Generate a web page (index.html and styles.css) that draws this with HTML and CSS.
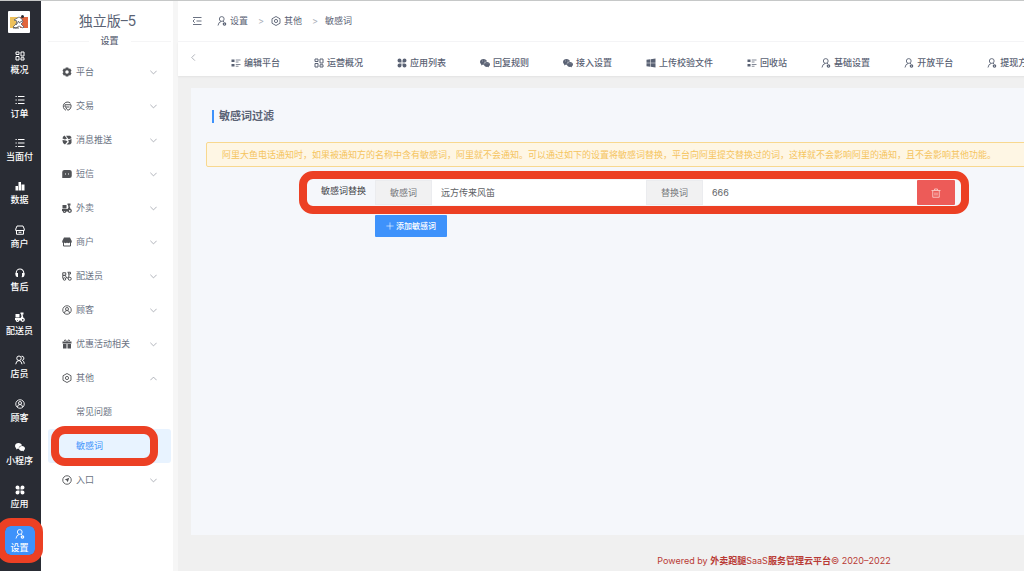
FILE: index.html
```html
<!DOCTYPE html>
<html lang="zh-CN">
<head>
  <meta charset="UTF-8" />
  <meta name="viewport" content="width=device-width, initial-scale=1.0"/>
  <title>敏感词过滤</title>
  <link rel="stylesheet" href="styles.css">
</head>
<body>

  <svg class="sprite" aria-hidden="true">
    <symbol id="i-grid" viewBox="0 0 20 20"><path fill="none" stroke="currentColor" stroke-width="2" d="M2 2h6v5H2zM12 2h6v8h-6zM2 11h6v7H2zM12 13.500h6v4.500h-6z"/></symbol>
    <symbol id="i-list" viewBox="0 0 20 20"><path fill="none" stroke="currentColor" stroke-width="2" d="M6 3h13M6 10h13M6 17h13M1 3h2.500M1 10h2.500M1 17h2.500"/></symbol>
    <symbol id="i-bars" viewBox="0 0 20 20"><path fill="currentColor" d="M1 10h5v9H1zM7 2h5v17H7zM13 7h6v12h-6z"/></symbol>
    <symbol id="i-shop" viewBox="0 0 20 20"><path fill="none" stroke="currentColor" stroke-width="2" d="M4 2h12l2.500 6v3h-17V8zM3 11v7.500h14V11M7 14.500h6"/></symbol>
    <symbol id="i-shop-fill" viewBox="0 0 20 20"><path fill="currentColor" d="M4 1h12l3.500 7v2a2.500 2.500 0 0 1-4.500 1 3 3 0 0 1-5 0 3 3 0 0 1-5 0A2.500 2.500 0 0 1 .5 10V8z"/><path fill="none" stroke="currentColor" stroke-width="2" d="M3 11v7h14v-7"/></symbol>
    <symbol id="i-headset" viewBox="0 0 20 20"><path fill="none" stroke="currentColor" stroke-width="2.200" d="M2.500 13V9.500a7.500 7.500 0 0 1 15 0V13q0 4-4 5"/><path fill="currentColor" d="M1 10h5v8H4q-3-1-3-4zM14 10h5v4q0 3-3 4h-2z"/></symbol>
    <symbol id="i-scooter" viewBox="0 0 20 20"><path fill="currentColor" d="M1 4h8v7H1zM11 1h6v4h-2l2 7h-3l-1 5H7L5 12h6l2-3-1-5h-1zM0 12h6l4 4H0z"/><circle cx="5" cy="16" r="2.500" fill="none" stroke="currentColor" stroke-width="2.500"/><circle cx="15.500" cy="15.500" r="3" fill="none" stroke="currentColor" stroke-width="2.500"/></symbol>
    <symbol id="i-scooter-line" viewBox="0 0 20 20"><path fill="none" stroke="currentColor" stroke-width="2" d="M1.500 3.500h6v5h-6zM1.500 9h5l3 5H12l2-4-1-7.500h-2M13 2.500h4V6h-3M1.500 9v6"/><circle cx="5" cy="16" r="2.500" fill="none" stroke="currentColor" stroke-width="2"/><circle cx="15.500" cy="15.500" r="3" fill="none" stroke="currentColor" stroke-width="2"/></symbol>
    <symbol id="i-users" viewBox="0 0 20 20"><g fill="none" stroke="currentColor" stroke-width="2"><circle cx="8" cy="6.500" r="4.500"/><path d="M1.500 18.500q.5-7 6.500-7.500 5 .5 6 7.500M13 2.500a4 4 0 0 1 1.500 8q4 2 4 7"/></g></symbol>
    <symbol id="i-user-circle" viewBox="0 0 20 20"><g fill="none" stroke="currentColor" stroke-width="1.800"><circle cx="10" cy="10" r="8.500"/><circle cx="10" cy="8" r="3"/><path d="M5 16q0-5 5-5t5 5"/></g></symbol>
    <symbol id="i-wechat" viewBox="0 0 20 20"><path fill="currentColor" d="M7 2C3 2 0 4.500 0 8q0 2.800 2.500 4.500L2 15l2.800-1.400 2.700.4C7 10 10 7 14 7 13.500 4 10.500 2 7 2z"/><path fill="currentColor" d="M14 8c-3.500 0-6 2-6 5s2.500 5 6 5l2-.3L18 19l-.4-2.200Q20 15.300 20 13c0-3-2.500-5-6-5z"/><path stroke="#fff" stroke-opacity=".7" stroke-width="1.500" d="M4 6h1.500M9 6h1.500M11.500 11.500h1M15.500 11.500h1"/></symbol>
    <symbol id="i-apps" viewBox="0 0 20 20"><path fill="currentColor" d="M1 5a4 4 0 0 1 8 0v4H5a4 4 0 0 1-4-4zM11 5a4 4 0 1 1 4 4h-4zM5 11h4v4a4 4 0 1 1-4-4zM11 11h4a4 4 0 1 1-4 4z"/></symbol>
    <symbol id="i-user-set" viewBox="0 0 20 20"><g fill="none" stroke="currentColor" stroke-width="1.800"><circle cx="9.500" cy="6" r="4.800"/><path d="M2 19q1-7 6.500-8.200M12 10.500l2 1"/></g><circle cx="15" cy="16" r="2.400" fill="none" stroke="currentColor" stroke-width="2.400"/></symbol>
    <symbol id="i-gear" viewBox="0 0 20 20"><path fill="currentColor" fill-rule="evenodd" d="M7.500 1h5l1 2.500 3-.5 2.500 4.500L17 10l2 2.500-2.500 4.500-3-.5-1 2.500h-5l-1-2.500-3 .5L1 12.500 3 10 1 7.500 3.500 3l3 .5zM10 6.500a3.500 3.500 0 1 0 0 7 3.500 3.500 0 0 0 0-7z"/></symbol>
    <symbol id="i-trade" viewBox="0 0 20 20"><g fill="none" stroke="currentColor" stroke-width="2"><path d="M17 4.500A8.500 8.500 0 1 0 8 18.500M6 7.500h12v4.500q-1 5-6 6.500-3.500-2-4-5.500M6 7.500V12h9"/></g></symbol>
    <symbol id="i-push" viewBox="0 0 20 20"><path fill="currentColor" d="M1 7q0-4 4-6l5 6-4 2zM8 1.500h8q3 1 3 5l-6 2zM1 10l7 1 3 2-5 6q-5-2-5-9zM12 11l7-3v8q-2 3-5 3H9l5-5z"/></symbol>
    <symbol id="i-sms" viewBox="0 0 20 20"><path fill="currentColor" d="M5 2h10q4.500 0 4.500 4v8q0 4-4.500 4H.5V6Q.5 2 5 2z"/><path stroke="#fff" stroke-width="2" d="M6 10h2M12 10h2"/></symbol>
    <symbol id="i-gift" viewBox="0 0 20 20"><path fill="currentColor" d="M1 5h18v4H1zM2 10h6v9H2zM9 10h2v9H9zM12 10h6v9h-6z"/><path fill="none" stroke="currentColor" stroke-width="2" d="M10 5Q5-1 5 4M10 5q5-6 5-1"/></symbol>
    <symbol id="i-hex" viewBox="0 0 20 20"><g fill="none" stroke="currentColor" stroke-width="1.800"><path d="M10 1l8 4.500v9L10 19l-8-4.500v-9z"/><circle cx="10" cy="10" r="3.200"/></g></symbol>
    <symbol id="i-compass" viewBox="0 0 20 20"><circle cx="10" cy="10" r="8.500" fill="none" stroke="currentColor" stroke-width="1.800"/><path fill="currentColor" d="M14.500 5.500l-3 9-2-3.500-4-2z"/></symbol>
    <symbol id="i-detail" viewBox="0 0 20 20"><path fill="currentColor" d="M1 3h6v5H1zM1 12h6v5H1z"/><path fill="none" stroke="currentColor" stroke-width="1.500" d="M9.500 4H19M9.500 8H15M9.500 13H19M9.500 16.500H15"/></symbol>
    <symbol id="i-windows" viewBox="0 0 20 20"><path fill="currentColor" d="M1 3.500l7.500-1v7H1zM9.500 2.300L19 1v8.500H9.500zM1 10.500h7.500v7l-7.500-1zM9.500 10.500H19V19l-9.500-1.300z"/></symbol>
    <symbol id="i-fold" viewBox="0 0 20 20"><path fill="none" stroke="currentColor" stroke-width="1.800" d="M2 3h17M9 10h10M2 17h17M5.500 6.500L2 10l3.500 3.500"/></symbol>
    <symbol id="i-down" viewBox="0 0 20 20"><path fill="none" stroke="currentColor" stroke-width="2" d="M1 5l9 9 9-9"/></symbol>
    <symbol id="i-left" viewBox="0 0 20 20"><path fill="none" stroke="currentColor" stroke-width="2" d="M14 1l-9 9 9 9"/></symbol>
    <symbol id="i-plus" viewBox="0 0 20 20"><path fill="none" stroke="currentColor" stroke-width="1.500" d="M10 1v18M1 10h18"/></symbol>
    <symbol id="i-trash" viewBox="0 0 20 20"><path fill="none" stroke="currentColor" stroke-width="1.800" d="M1 5h18M7 4.500V2h6v2.500M3.500 5v13.500h13V5M8 9v6M12 9v6"/></symbol>
  </svg>

  <div class="app">

    <nav class="rail">
      <a class="logo" href="#" aria-label="首页">
        <svg viewBox="0 0 22 22">
          <rect width="22" height="22" rx="1" fill="#fff"/>
          <path fill="#edc15c" d="M2 6h8v11H2z"/>
          <path fill="#e2653c" d="M12 6h8v11h-8z"/>
          <path fill="#fff" stroke="#4a5060" stroke-width=".7" d="M6 9l5-3 3 2 1 3-2 2 3 3-1 1-4-2-3 2-3-1 3-3 1-3z"/>
          <path fill="none" stroke="#333844" stroke-width=".8" d="M8 14l3-4M11 12l3-2M5 17h6"/>
          <circle cx="14.500" cy="5.500" r="1.500" fill="#262a33"/>
        </svg>
      </a>
      <ul class="rail-list">
        <li><a href="#"><svg class="icon"><use href="#i-grid"/></svg>概况</a></li>
        <li><a href="#"><svg class="icon"><use href="#i-list"/></svg>订单</a></li>
        <li><a href="#"><svg class="icon"><use href="#i-list"/></svg>当面付</a></li>
        <li><a href="#"><svg class="icon"><use href="#i-bars"/></svg>数据</a></li>
        <li><a href="#"><svg class="icon"><use href="#i-shop"/></svg>商户</a></li>
        <li><a href="#"><svg class="icon"><use href="#i-headset"/></svg>售后</a></li>
        <li><a href="#"><svg class="icon"><use href="#i-scooter"/></svg>配送员</a></li>
        <li><a href="#"><svg class="icon"><use href="#i-users"/></svg>店员</a></li>
        <li><a href="#"><svg class="icon"><use href="#i-user-circle"/></svg>顾客</a></li>
        <li><a href="#"><svg class="icon"><use href="#i-wechat"/></svg>小程序</a></li>
        <li><a href="#"><svg class="icon"><use href="#i-apps"/></svg>应用</a></li>
        <li><a class="active marked" href="#"><svg class="icon"><use href="#i-user-set"/></svg>设置</a></li>
      </ul>
    </nav>

    <aside class="sidebar">
      <h1>独立版–5</h1>
      <div class="divider"><span>设置</span></div>
      <ul class="menu">
        <li><button><svg class="icon"><use href="#i-gear"/></svg>平台<svg class="arrow"><use href="#i-down"/></svg></button></li>
        <li><button><svg class="icon"><use href="#i-trade"/></svg>交易<svg class="arrow"><use href="#i-down"/></svg></button></li>
        <li><button><svg class="icon"><use href="#i-push"/></svg>消息推送<svg class="arrow"><use href="#i-down"/></svg></button></li>
        <li><button><svg class="icon"><use href="#i-sms"/></svg>短信<svg class="arrow"><use href="#i-down"/></svg></button></li>
        <li><button><svg class="icon"><use href="#i-scooter"/></svg>外卖<svg class="arrow"><use href="#i-down"/></svg></button></li>
        <li><button><svg class="icon"><use href="#i-shop-fill"/></svg>商户<svg class="arrow"><use href="#i-down"/></svg></button></li>
        <li><button><svg class="icon"><use href="#i-scooter-line"/></svg>配送员<svg class="arrow"><use href="#i-down"/></svg></button></li>
        <li><button><svg class="icon"><use href="#i-user-circle"/></svg>顾客<svg class="arrow"><use href="#i-down"/></svg></button></li>
        <li><button><svg class="icon"><use href="#i-gift"/></svg>优惠活动相关<svg class="arrow"><use href="#i-down"/></svg></button></li>
        <li>
          <button aria-expanded="true"><svg class="icon"><use href="#i-hex"/></svg>其他<svg class="arrow up"><use href="#i-down"/></svg></button>
          <ul class="submenu">
            <li><a href="#">常见问题</a></li>
            <li><a class="active marked" href="#">敏感词</a></li>
          </ul>
        </li>
        <li><button><svg class="icon"><use href="#i-compass"/></svg>入口<svg class="arrow"><use href="#i-down"/></svg></button></li>
      </ul>
    </aside>

    <div class="main">
      <header class="topbar">
        <button class="fold" aria-label="收起菜单"><svg class="icon"><use href="#i-fold"/></svg></button>
        <a href="#"><svg class="icon"><use href="#i-user-set"/></svg>设置</a>
        <span class="sep">&gt;</span>
        <a href="#"><svg class="icon"><use href="#i-hex"/></svg>其他</a>
        <span class="sep">&gt;</span>
        <span>敏感词</span>
      </header>

      <nav class="tabs">
        <button class="prev" aria-label="向左"><svg class="arrow"><use href="#i-left"/></svg></button>
        <a href="#"><svg class="icon"><use href="#i-detail"/></svg>编辑平台</a>
        <a href="#"><svg class="icon"><use href="#i-grid"/></svg>运营概况</a>
        <a href="#"><svg class="icon"><use href="#i-apps"/></svg>应用列表</a>
        <a href="#"><svg class="icon"><use href="#i-wechat"/></svg>回复规则</a>
        <a href="#"><svg class="icon"><use href="#i-wechat"/></svg>接入设置</a>
        <a href="#"><svg class="icon"><use href="#i-windows"/></svg>上传校验文件</a>
        <a href="#"><svg class="icon"><use href="#i-detail"/></svg>回收站</a>
        <a href="#"><svg class="icon"><use href="#i-user-set"/></svg>基础设置</a>
        <a href="#"><svg class="icon"><use href="#i-user-set"/></svg>开放平台</a>
        <a href="#"><svg class="icon"><use href="#i-user-set"/></svg>提现方式</a>
      </nav>

      <main class="card">
        <h2>敏感词过滤</h2>
        <p class="alert">阿里大鱼电话通知时，如果被通知方的名称中含有敏感词，阿里就不会通知。可以通过如下的设置将敏感词替换，平台向阿里提交替换过的词，这样就不会影响阿里的通知，且不会影响其他功能。</p>

        <form class="form">
          <div class="row marked">
            <span class="row-label">敏感词替换</span>
            <div class="group">
              <label for="word">敏感词</label>
              <input type="text" id="word" value="远方传来风笛" />
              <label for="replace">替换词</label>
              <input type="text" id="replace" value="666" />
              <button type="button" class="delete" aria-label="删除"><svg class="icon"><use href="#i-trash"/></svg></button>
            </div>
          </div>
          <button type="button" class="add"><svg class="icon"><use href="#i-plus"/></svg>添加敏感词</button>
        </form>
      </main>

      <footer class="footer">Powered by <b>外卖跑腿</b>SaaS<b>服务管理云平台</b>© 2020–2022</footer>
    </div>

  </div>

</body>
</html>
```
FILE: styles.css
```css
* {
  box-sizing: border-box;
}
body {
  margin: 0;
  overflow: hidden;
  background: #f0f0f0;
  color: #5a6274;
  font-family: Inter, "Noto Sans CJK SC", sans-serif;
  font-size: 9px;
  line-height: 12px;
}
ul {
  list-style: none;
  margin: 0;
  padding: 0;
}
a {
  color: inherit;
  text-decoration: none;
}
button, input {
  font: inherit;
  color: inherit;
  border: none;
  background: none;
  padding: 0;
}
button {
  cursor: pointer;
}
.sprite {
  display: none;
}
.icon {
  width: 10px;
  height: 10px;
  flex: none;
}
.arrow {
  width: 7px;
  height: 7px;
  flex: none;
  color: #8f949e;
}
.up {
  transform: rotate(180deg);
}

/* the layout is built for wide desktops, narrow windows cut it off */
.app {
  display: flex;
  min-width: 1370px;
  min-height: 100vh;
  border-top: 1px solid #c6c8c8;
}

/* red ring round the places to look at */
.marked {
  position: relative;
}
.marked::after {
  content: "";
  position: absolute;
  z-index: 2;
  inset: -8px;
  border: 8px solid #ec4024;
  border-radius: 14px;
  pointer-events: none;
}

/* dark rail */
.rail {
  display: flex;
  flex-direction: column;
  width: 41px;
  padding-bottom: 9px;
  background: #292c34;
  color: #fff;
}
.logo {
  padding: 10px 8px 0;
  height: 40px;
}
.logo svg {
  display: block;
  width: 22px;
  height: 22px;
}
.rail-list {
  flex: 1;
  display: flex;
  flex-direction: column;
  padding-right: 2px;
}
.rail-list li {
  flex: 1;
  display: flex;
  align-items: center;
  justify-content: center;
}
.rail-list a {
  display: flex;
  flex-direction: column;
  align-items: center;
  gap: 3px;
  min-width: 30px;
  padding: 3px 0 1px;
  border-radius: 5px;
  font-weight: 500;
  white-space: nowrap;
}
.rail-list .active {
  background: #3e92fb;
}

/* second level menu */
.sidebar {
  width: 137px;
  padding: 10px 2px 0 7px;
  background: #fff;
  border-right: 5px solid #f6f6f6;
}
.sidebar h1 {
  margin: 0;
  padding-right: 4px;
  font-size: 14px;
  font-weight: 400;
  line-height: 20px;
  text-align: center;
}
.divider {
  display: flex;
  align-items: center;
  gap: 12px;
  margin: 4px 0 8px;
  font-weight: 500;
}
.divider::before, .divider::after {
  content: "";
  flex: 1;
  height: 1px;
  background: #f5f5f6;
}
.menu {
  color: #6b7383;
}
.menu button {
  display: flex;
  align-items: center;
  gap: 4px;
  width: 100%;
  height: 34px;
  padding: 0 14px;
}
.menu .icon {
  color: #505256;
}
.menu .arrow {
  margin-left: auto;
}
.submenu a {
  display: flex;
  align-items: center;
  height: 34px;
  padding-left: 28px;
  border-radius: 3px;
}
.submenu .active {
  background: #e8f3ff;
  color: #3e92fb;
}
.submenu .marked::after {
  inset: -3px 13px -3px 3px;
}

/* page */
.main {
  flex: 1;
  display: flex;
  flex-direction: column;
  min-width: 0;
}
.topbar {
  display: flex;
  align-items: center;
  height: 41px;
  padding-left: 14px;
  background: #fff;
  border-bottom: 1px solid #f5f5f7;
}
.topbar a {
  display: flex;
  align-items: center;
  gap: 3px;
}
.fold {
  display: flex;
  margin-right: 15px;
}
.sep {
  margin: 0 7px 0 10px;
  color: #a9aeb8;
}
.tabs {
  display: flex;
  align-items: center;
  gap: 34px;
  height: 34px;
  padding: 7px 0 0 12px;
  background: #fff;
  box-shadow: 0 1px 2px rgba(0, 0, 0, 0.06);
  font-weight: 500;
}
.tabs a {
  display: flex;
  align-items: center;
  gap: 3px;
  white-space: nowrap;
}
.prev {
  display: flex;
  align-self: flex-start;
  margin-top: 5px;
}
.card {
  flex: 1;
  margin: 12px 13px 0;
  padding: 21px 15px;
  background: #f5f7fb;
}
.card h2 {
  display: flex;
  align-items: center;
  gap: 5px;
  margin: 0 0 19px 6px;
  font-size: 11px;
  font-weight: 700;
  line-height: 14px;
}
.card h2::before {
  content: "";
  width: 2px;
  height: 13px;
  background: #3e92fb;
}
.alert {
  margin: 0 0 13px;
  padding: 6px 15px 5px;
  border: 1px solid #f8d88f;
  border-radius: 2px;
  background: #fef6e4;
  color: #f5c45f;
}
.form {
  max-width: 749px;
}
.row {
  display: flex;
  gap: 6px;
  margin-left: 101px;
  padding-left: 14px;
}
.row.marked::after {
  inset: -9px -14px -9px -8px;
}
.row-label {
  width: 48px;
  line-height: 22px;
  color: #3f4247;
  white-space: nowrap;
}
.group {
  flex: 1;
  display: flex;
  height: 25px;
  color: #606266;
}
.group label {
  width: 57px;
  line-height: 23px;
  text-align: center;
  background: #f1f1f2;
  border: 1px solid #ebecef;
  color: #75777b;
}
.group input {
  flex: 1;
  min-width: 0;
  padding: 0 9px;
  background: #fff;
}
.delete {
  display: flex;
  align-items: center;
  justify-content: center;
  width: 38px;
  border-radius: 1px;
  background: #ed5b58;
  color: #f9c9c6;
}
.add {
  display: flex;
  align-items: center;
  justify-content: center;
  gap: 2px;
  width: 72px;
  height: 22px;
  margin: 10px 0 0 169px;
  border-radius: 1px;
  background: #3e92fb;
  color: #fff;
  font-size: 8px;
  font-weight: 500;
}
.add .icon {
  width: 8px;
  height: 8px;
}
.footer {
  height: 36px;
  padding-top: 20px;
  color: #b93a35;
  text-align: center;
}
```
